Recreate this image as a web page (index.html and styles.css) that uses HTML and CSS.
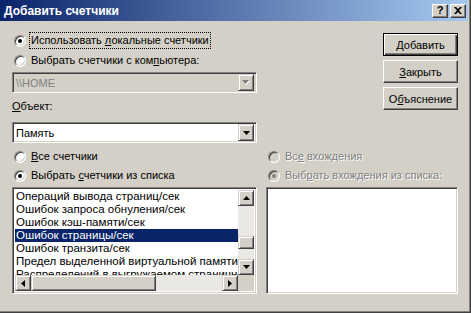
FILE: index.html
```html
<!doctype html>
<html lang="ru">

<head>
  <meta charset="UTF-8" />
  <title>Добавить счетчики</title>
  <link rel="stylesheet" href="styles.css">
</head>

<body>
  <div class="window">
    <div class="titlebar">
      <span class="title">Добавить счетчики</span>
      <div class="caption-buttons">
        <span class="cap-btn help">?</span>
        <span class="cap-btn">
          <svg width="8" height="7" viewBox="0 0 8 7">
            <path d="M0 0h2l2 2 2-2h2L5 3.5 8 7H6L4 5 2 7H0l3-3.5z" fill="#000" />
          </svg>
        </span>
      </div>
    </div>

    <div class="content">
      <div class="left-top">
        <div class="radio">
          <span class="dot checked"></span>
          <span class="text focus">Использовать <u>л</u>окальные счетчики</span>
        </div>
        <div class="radio">
          <span class="dot"></span>
          <span class="text">Выбрать счетчики с ком<u>п</u>ьютера:</span>
        </div>
        <div class="combo disabled">
          <span class="value">\\HOME</span>
          <span class="btn drop">
            <svg width="8" height="5" viewBox="0 0 8 5">
              <path d="M1 1h7L4.5 5z" fill="#fff" />
              <path d="M0 0h7L3.5 4z" fill="#808080" />
            </svg>
          </span>
        </div>
        <div class="label"><u>О</u>бъект:</div>
        <div class="combo">
          <span class="value">Память</span>
          <span class="btn drop">
            <svg width="7" height="4" viewBox="0 0 7 4"><path d="M0 0h7L3.5 4z" fill="#000" /></svg>
          </span>
        </div>
      </div>

      <div class="buttons">
        <button class="push default"><u>Д</u>обавить</button>
        <button class="push"><u>З</u>акрыть</button>
        <button class="push">О<u>б</u>ъяснение</button>
      </div>

      <div class="radio-group">
        <div class="radio tall">
          <span class="dot"></span>
          <span class="text"><u>В</u>се счетчики</span>
        </div>
        <div class="radio tall">
          <span class="dot checked"></span>
          <span class="text">Выбрать <u>с</u>четчики из списка</span>
        </div>
      </div>

      <div class="radio-group">
        <div class="radio tall off">
          <span class="dot"></span>
          <span class="text">Вс<u>е</u> вхождения</span>
        </div>
        <div class="radio tall off">
          <span class="dot checked"></span>
          <span class="text">Выб<u>р</u>ать вхождения из списка:</span>
        </div>
      </div>

      <div class="listbox">
        <div class="items">
          <div class="item">Операций вывода страниц/сек</div>
          <div class="item">Ошибок запроса обнуления/сек</div>
          <div class="item">Ошибок кэш-памяти/сек</div>
          <div class="item selected">Ошибок страницы/сек</div>
          <div class="item">Ошибок транзита/сек</div>
          <div class="item">Предел выделенной виртуальной памяти</div>
          <div class="item">Распределений в выгружаемом страничном пуле</div>
        </div>
        <div class="vscroll">
          <span class="btn arrow">
            <svg width="7" height="4" viewBox="0 0 7 4"><path d="M0 4h7L3.5 0z" fill="#000" /></svg>
          </span>
          <div class="track">
            <span class="btn thumb"></span>
          </div>
          <span class="btn arrow">
            <svg width="7" height="4" viewBox="0 0 7 4"><path d="M0 0h7L3.5 4z" fill="#000" /></svg>
          </span>
        </div>
        <div class="hscroll">
          <span class="btn arrow">
            <svg width="4" height="7" viewBox="0 0 4 7"><path d="M4 0v7L0 3.5z" fill="#000" /></svg>
          </span>
          <div class="track">
            <span class="btn thumb"></span>
          </div>
          <span class="btn arrow">
            <svg width="4" height="7" viewBox="0 0 4 7"><path d="M0 0v7l4-3.5z" fill="#000" /></svg>
          </span>
        </div>
        <div class="sizebox"></div>
      </div>

      <div class="listbox empty"></div>
    </div>
  </div>
</body>

</html>
```

FILE: styles.css
```css
* {
  margin: 0;
  padding: 0;
  box-sizing: border-box;
}

body {
  background: #d4d0c8;
}

.window {
  width: 471px;
  height: 313px;
  background: #d4d0c8;
  box-shadow: inset -1px -1px #404040, inset -2px -2px #808080;
  font-family: "Liberation Sans", Arial, sans-serif;
  font-size: 11px;
  color: #000;
  overflow: hidden;
}

u {
  text-decoration: underline;
  text-underline-offset: 1px;
}

/* title bar */

.titlebar {
  height: 21px;
  margin-right: 3px;
  padding: 0 2px 0 4px;
  display: flex;
  align-items: center;
  justify-content: space-between;
  background: linear-gradient(to right, #0a246a, #a6caf0);
}

.title {
  color: #fff;
  font-weight: bold;
  font-size: 12px;
}

.caption-buttons {
  display: flex;
  gap: 2px;
}

.cap-btn {
  width: 16px;
  height: 14px;
  display: flex;
  align-items: center;
  justify-content: center;
  background: #d4d0c8;
  border: 1px solid;
  border-color: #fff #404040 #404040 #fff;
  box-shadow: inset -1px -1px #808080;
}

.cap-btn.help {
  font-weight: bold;
  font-size: 11px;
  line-height: 1;
}

/* layout */

.content {
  display: grid;
  grid-template-columns: 245px 192px;
  column-gap: 9px;
  padding: 11px 0 0 12px;
}

.left-top {
  display: flex;
  flex-direction: column;
}

.buttons {
  display: flex;
  flex-direction: column;
  align-items: flex-end;
  gap: 4px;
  padding-top: 1px;
}

.radio-group {
  display: flex;
  flex-direction: column;
  margin: 4px 0 2px;
}

/* radio buttons */

.radio {
  height: 17px;
  display: flex;
  align-items: center;
  gap: 4px;
  padding-left: 2px;
}

.radio + .radio {
  margin-top: 3px;
}

.radio.tall {
  height: 19px;
  margin-top: 0;
}

.dot {
  width: 12px;
  height: 12px;
  flex: none;
  display: flex;
  align-items: center;
  justify-content: center;
  border-radius: 50%;
  border: 1px solid;
  border-color: #808080 #fff #fff #808080;
  box-shadow: inset 1px 1px #404040, inset -1px -1px #d4d0c8;
  background: #fff;
}

.dot.checked::after {
  content: "";
  width: 4px;
  height: 4px;
  border-radius: 50%;
  background: #000;
}

.radio .text {
  padding: 1px 1px;
  line-height: 13px;
}

.radio .text.focus {
  outline: 1px dotted #000;
  outline-offset: 0;
}

.radio.off .text {
  color: #808080;
  text-shadow: 1px 1px #fff;
}

.radio.off .dot {
  background: #d4d0c8;
}

.radio.off .dot.checked::after {
  background: #808080;
}

/* combo boxes */

.combo {
  height: 21px;
  margin-top: 3px;
  padding: 2px;
  display: flex;
  align-items: center;
  border: 1px solid;
  border-color: #808080 #fff #fff #808080;
  box-shadow: inset 1px 1px #404040, inset -1px -1px #d4d0c8;
  background: #fff;
}

.combo .value {
  flex: 1;
  padding-left: 1px;
}

.combo.disabled {
  background: #d4d0c8;
}

.combo.disabled .value {
  color: #808080;
}

.label {
  line-height: 13px;
  margin: 7px 0 6px;
}

.btn {
  display: flex;
  align-items: center;
  justify-content: center;
  background: #d4d0c8;
  border: 1px solid;
  border-color: #d4d0c8 #404040 #404040 #d4d0c8;
  box-shadow: inset 1px 1px #fff, inset -1px -1px #808080;
}

.drop {
  width: 16px;
  height: 17px;
}

/* push buttons */

.push {
  width: 75px;
  height: 23px;
  font: inherit;
  color: #000;
  background: #d4d0c8;
  border: 1px solid;
  border-color: #fff #404040 #404040 #fff;
  box-shadow: inset -1px -1px #808080;
}

.push.default {
  border: 1px solid #000;
  box-shadow: inset 1px 1px #fff, inset -1px -1px #404040, inset -2px -2px #808080;
}

/* list boxes */

.listbox {
  height: 107px;
  padding: 2px;
  display: grid;
  grid-template-columns: 1fr 16px;
  grid-template-rows: 1fr 16px;
  border: 1px solid;
  border-color: #808080 #fff #fff #808080;
  box-shadow: inset 1px 1px #404040, inset -1px -1px #d4d0c8;
  background: #fff;
}

.listbox.empty {
  display: block;
}

.items {
  overflow: hidden;
}

.item {
  height: 13px;
  line-height: 13px;
  padding-left: 1px;
  font-size: 11.5px;
  white-space: nowrap;
}

.item.selected {
  background: #0a246a;
  color: #fff;
}

.vscroll,
.hscroll {
  display: flex;
  background: #eae8e4;
}

.vscroll {
  flex-direction: column;
}

.arrow {
  width: 16px;
  height: 16px;
  flex: none;
}

.track {
  flex: 1;
  display: flex;
}

.vscroll .track {
  flex-direction: column;
}

.vscroll .thumb {
  height: 13px;
  margin-top: 30px;
}

.hscroll .thumb {
  width: 125px;
}

.sizebox {
  background: #d4d0c8;
}
```
